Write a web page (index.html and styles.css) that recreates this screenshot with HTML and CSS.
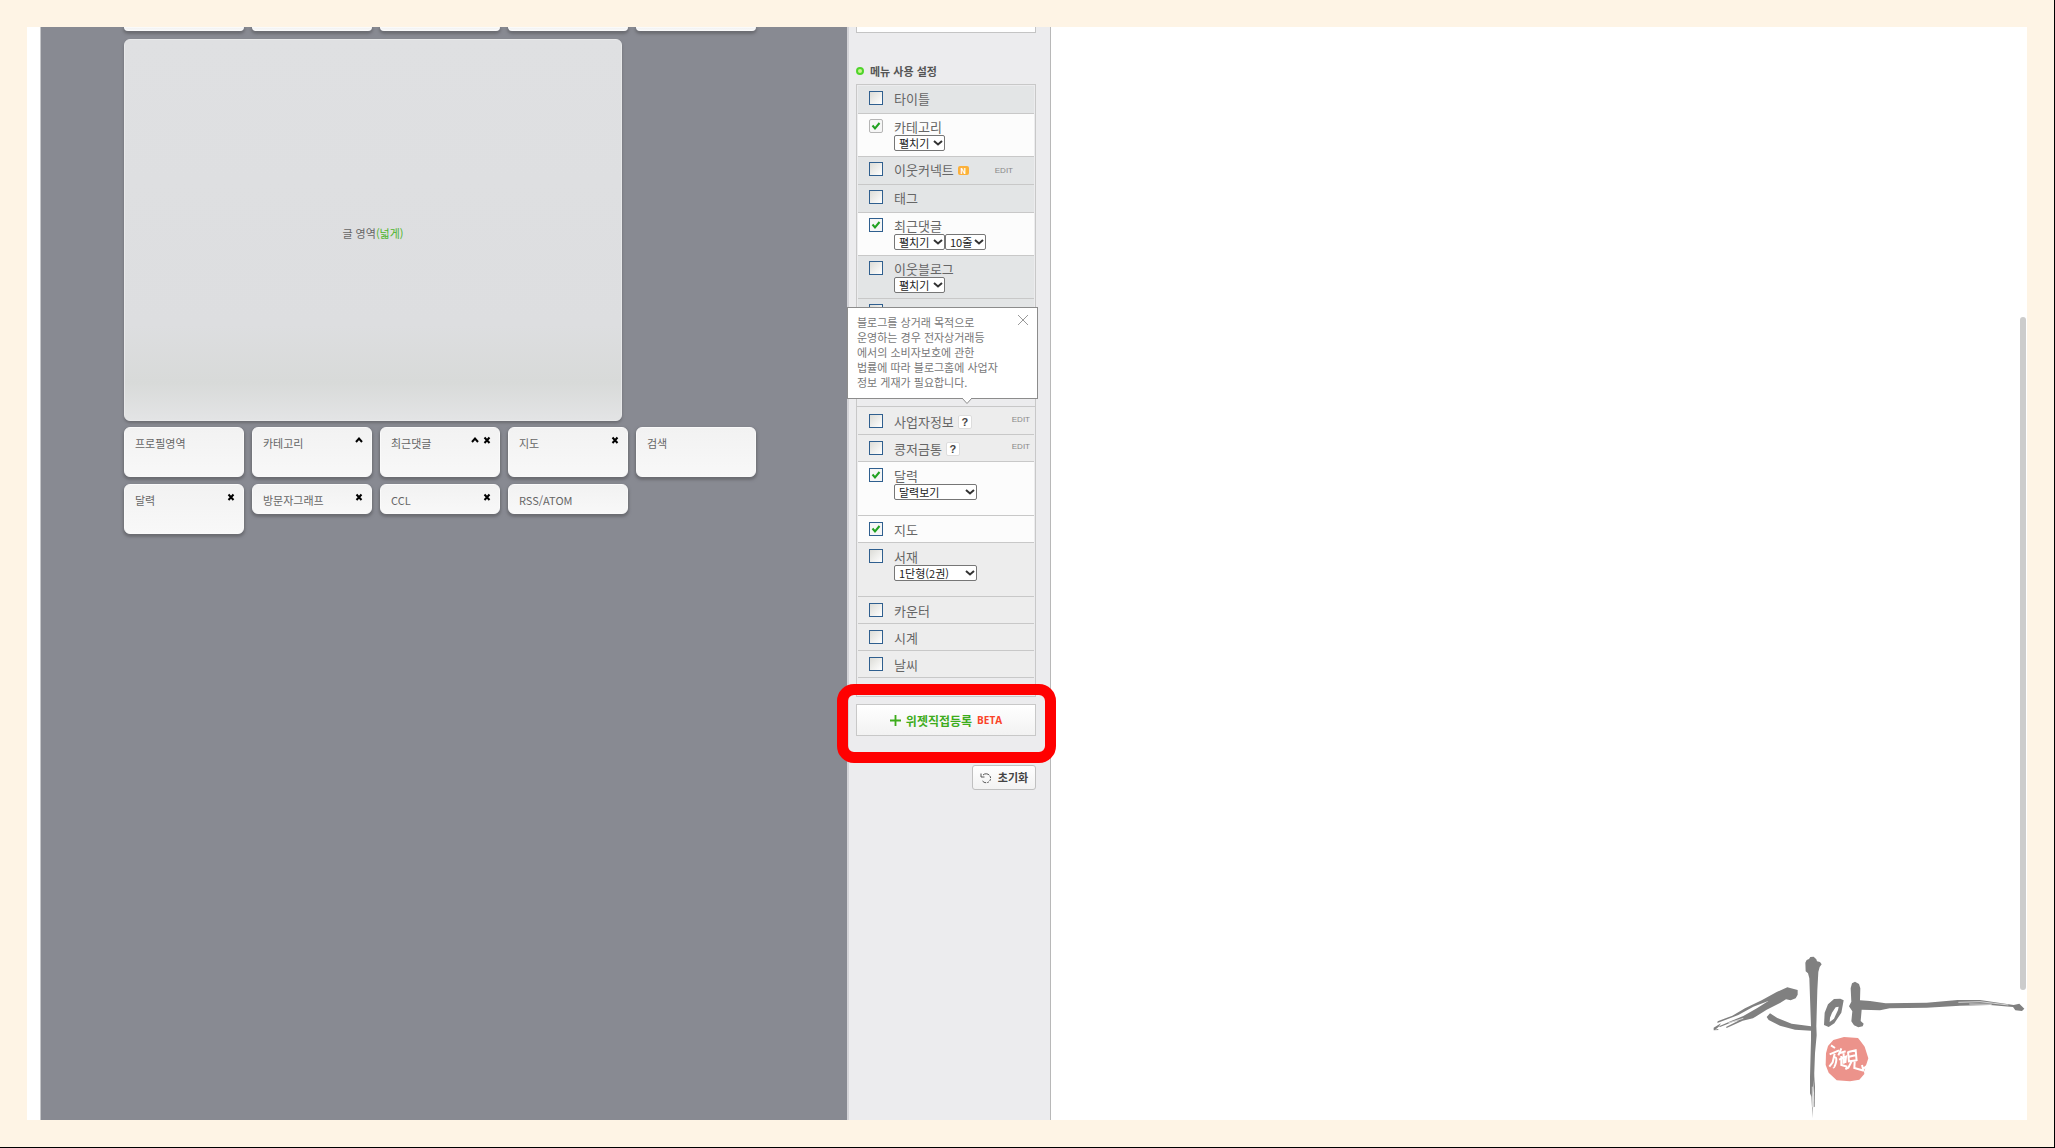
FILE: index.html
```html
<!DOCTYPE html>
<html lang="ko">
<head>
<meta charset="utf-8">
<title>레이아웃 · 위젯 설정</title>
<link rel="stylesheet" href="styles.css">
</head>
<body>
<div class="frame">
  <main class="canvas">
    <div class="grid cut-row">
      <div class="card cut"></div><div class="card cut"></div><div class="card cut"></div><div class="card cut"></div><div class="card cut"></div>
    </div>
    <section class="post-area"><p>글 영역<span class="wide">(넓게)</span></p></section>
    <div class="grid">
      <div class="card tall"><span>프로필영역</span></div>
      <div class="card tall"><span>카테고리</span><span class="tools"><button class="tool" aria-label="접기"><svg viewBox="0 0 8 8"><path d="M1 6 4 2.500 7 6"/></svg></button></span></div>
      <div class="card tall"><span>최근댓글</span><span class="tools"><button class="tool" aria-label="접기"><svg viewBox="0 0 8 8"><path d="M1 6 4 2.500 7 6"/></svg></button><button class="tool" aria-label="삭제"><svg viewBox="0 0 8 8"><path d="M1.500 1.500 6.500 7M6.500 1.500 1.500 7"/></svg></button></span></div>
      <div class="card tall"><span>지도</span><span class="tools"><button class="tool" aria-label="삭제"><svg viewBox="0 0 8 8"><path d="M1.500 1.500 6.500 7M6.500 1.500 1.500 7"/></svg></button></span></div>
      <div class="card tall"><span>검색</span></div>
      <div class="card tall"><span>달력</span><span class="tools"><button class="tool" aria-label="삭제"><svg viewBox="0 0 8 8"><path d="M1.500 1.500 6.500 7M6.500 1.500 1.500 7"/></svg></button></span></div>
      <div class="card"><span>방문자그래프</span><span class="tools"><button class="tool" aria-label="삭제"><svg viewBox="0 0 8 8"><path d="M1.500 1.500 6.500 7M6.500 1.500 1.500 7"/></svg></button></span></div>
      <div class="card"><span>CCL</span><span class="tools"><button class="tool" aria-label="삭제"><svg viewBox="0 0 8 8"><path d="M1.500 1.500 6.500 7M6.500 1.500 1.500 7"/></svg></button></span></div>
      <div class="card"><span>RSS/ATOM</span></div>
    </div>
  </main>

  <aside class="sidebar">
    <div class="upper-box"></div>
    <h2 class="heading">메뉴 사용 설정</h2>
    <div class="menu menu-main">
      <div class="row"><input type="checkbox" id="m1"><div class="body"><label for="m1">타이틀</label></div></div>
      <div class="row on double"><input type="checkbox" id="m2" class="plain" checked><div class="body"><label for="m2">카테고리</label><div class="selects"><select class="s-mid" aria-label="카테고리 보기"><option>펼치기</option></select></div></div></div>
      <div class="row"><input type="checkbox" id="m3"><div class="body"><label for="m3">이웃커넥트</label><span class="new">N</span></div><a class="edit inset" href="#">EDIT</a></div>
      <div class="row"><input type="checkbox" id="m4"><div class="body"><label for="m4">태그</label></div></div>
      <div class="row on double"><input type="checkbox" id="m5" checked><div class="body"><label for="m5">최근댓글</label><div class="selects"><select class="s-mid" aria-label="최근댓글 보기"><option>펼치기</option></select><select class="s-small" aria-label="최근댓글 줄 수"><option>10줄</option></select></div></div></div>
      <div class="row double"><input type="checkbox" id="m6"><div class="body"><label for="m6">이웃블로그</label><div class="selects"><select class="s-mid" aria-label="이웃블로그 보기"><option>펼치기</option></select></div></div></div>
      <div class="row last"><input type="checkbox" id="m7" aria-label="메뉴"></div>
      <div class="popover" role="note">
        <p>블로그를 상거래 목적으로<br>운영하는 경우 전자상거래등<br>에서의 소비자보호에 관한<br>법률에 따라 블로그홈에 사업자<br>정보 게재가 필요합니다.</p>
        <button class="close" aria-label="닫기"><svg viewBox="0 0 12 12"><path d="M1 1 11 11M11 1 1 11"/></svg></button>
        <svg class="arrow" viewBox="0 0 12 7"><path d="M1 0 6 5.500 11 0"/></svg>
      </div>
    </div>
    <div class="menu menu-widgets">
      <div class="row"><input type="checkbox" id="w1"><div class="body"><label for="w1">사업자정보</label><button class="help" aria-label="사업자정보 도움말">?</button></div><a class="edit" href="#">EDIT</a></div>
      <div class="row"><input type="checkbox" id="w2"><div class="body"><label for="w2">콩저금통</label><button class="help" aria-label="콩저금통 도움말">?</button></div><a class="edit" href="#">EDIT</a></div>
      <div class="row on large"><input type="checkbox" id="w3" checked><div class="body"><label for="w3">달력</label><div class="selects"><select class="s-large" aria-label="달력 형식"><option>달력보기</option></select></div></div></div>
      <div class="row on"><input type="checkbox" id="w4" checked><div class="body"><label for="w4">지도</label></div></div>
      <div class="row large"><input type="checkbox" id="w5"><div class="body"><label for="w5">서재</label><div class="selects"><select class="s-large" aria-label="서재 형식"><option>1단형(2권)</option></select></div></div></div>
      <div class="row"><input type="checkbox" id="w6"><div class="body"><label for="w6">카운터</label></div></div>
      <div class="row"><input type="checkbox" id="w7"><div class="body"><label for="w7">시계</label></div></div>
      <div class="row"><input type="checkbox" id="w8"><div class="body"><label for="w8">날씨</label></div></div>
    </div>
    <div class="register">
      <button class="register-btn"><svg viewBox="0 0 12 12"><path d="M6 0V12M0 6H12"/></svg>위젯직접등록 <span class="beta">BETA</span></button>
      <div class="marker"></div>
    </div>
    <button class="reset"><svg viewBox="0 0 12 12"><path d="M3 3A4.500 4.500 0 1 1 2.500 9" stroke-dasharray="7 1 2 1 2 1 2 1"/><path d="M1 1.500V5H4.500"/></svg>초기화</button>
  </aside>

  <div class="scroll-thumb"></div>
  <svg class="signature" viewBox="90 69 951 501" role="img" aria-label="시아">
    <g class="ink">
      <path d="M376 98 380 90 387 87 391 81 401 80 409 88 411 94 420 96 425 103 419 111 415 126 412 180 409 289 410 316 405 370 402 450 398 500 398 565 394 500 390 490 390 440 393 330 393 302 345 299 300 287 266 270 260 261 270 250 292 264 335 281 393 289 388 145 384 130 377 124Z"/>
      <path d="M402 430 405 470 404 530 401 532Z"/>
      <path d="M353 180 353 194 347 205 332 211 318 208 300 219 260 239 219 265 188 272 140 294 138 291 178 271 158 276 120 291 117 289 155 272 190 258 232 234 265 213 220 230 175 255 112 279 113 274 157 257 195 235 245 211 290 186 322 172Z"/>
      <path d="M101 293 123 280 116 290 105 300 112 297 117 300 101 301Z"/>
      <path fill-rule="evenodd" d="M432 285 434 248 444 223 462 207 481 206 491 211 484 248 463 280 446 291ZM449 276 462 266 474 240 476 230 467 232 456 248 450 263Z"/>
      <path d="M512 175 516 160 525 155 537 162 541 175 540 211 570 213 617 220 740 218 833 210 900 210 1001 225 1018 221 1033 236 1026 243 1006 241 999 231 930 225 840 227 740 233 629 235 600 241 545 239 542 273 551 281 548 289 535 292 522 286 514 274 517 244 507 229 514 215Z"/>
    </g>
    <path class="dry" d="M835 217 900 215 985 225M868 222 935 223M160 268 235 228M145 279 190 265M397 470V532"/>
    <path class="seal" d="M460 330 492 321 534 324 543 335 554 350 565 385 552 425 553 432 538 449 510 454 470 451 446 428 437 405 438 370 444 348Z"/>
    <path class="carve" d="M453 346 465 354M449 373 477 361M464 371 458 397 448 410M464 382C476 380 463 417 460 412M484 355 475 376M480 369 497 364M484 378V405L502 410M477 389 498 380 496 399M491 370V401M504 364 507 397M505 366 527 361 530 393M507 380 526 376M508 394 531 391M515 394 505 413 496 417M524 395 523 414 552 422M546 405 549 417 563 406"/>
  </svg>
</div>
</body>
</html>
```
FILE: styles.css
```css
*, *::before { box-sizing: border-box; }

body {
  margin: 0;
  min-height: 100vh;
  padding: 27px;
  display: flex;
  background: #fef4e5;
  border-right: 1px solid #000;
  border-bottom: 1px solid #000;
  font-family: "Noto Sans CJK KR", sans-serif;
  font-size: 11px;
  line-height: 15px;
  color: #666;
}

button { font: inherit; color: inherit; cursor: pointer; }
svg { display: block; fill: none; }

.frame {
  position: relative;
  flex: 1;
  display: flex;
  overflow: hidden;
  padding-left: 13px;
  background: #fff;
}

/* layout canvas */
.canvas {
  flex: 0 1 807px;
  padding-left: 83px;
  background: #888a92;
  border-left: 1px solid #c4c5c8;
}

.grid {
  display: grid;
  grid-template-columns: repeat(5, 120px);
  align-items: start;
  gap: 7px 8px;
}

.card {
  display: flex;
  justify-content: space-between;
  height: 30px;
  padding: 8px 8px 0 10px;
  border: 1px solid #fafafa;
  border-radius: 6px;
  background: linear-gradient(#f2f2f2, #f8f8f8);
  box-shadow: 0 2px 3px 1px #6b6c72;
}
.card.tall { height: 50px; }
.card.cut {
  height: 4px;
  padding: 0;
  border-radius: 0 0 5px 5px;
}

.tools { display: flex; gap: 4px; height: 8px; }
.tool { width: 8px; height: 8px; padding: 0; border: 0; background: none; }
.tool svg { width: 8px; height: 8px; stroke: #000; stroke-width: 2; }

.post-area {
  display: grid;
  place-items: center;
  width: 498px;
  height: 382px;
  margin: 8px 0 6px;
  border: 1px solid #e8e9ea;
  border-radius: 6px;
  background: linear-gradient(#dfe0e2, #dddee0 75%, #d8dad9 90%, #e3e4e5);
  box-shadow: 0 2px 3px #6b6c72;
}
.post-area p { margin: 6px 0 0; }
.wide { color: #4db42c; }

/* settings sidebar */
.sidebar {
  flex: 0 0 204px;
  padding: 0 14px 0 7px;
  background: #ececee;
  border-left: 2px solid #d4d4d8;
  border-right: 1px solid #b8b8b8;
}

.upper-box {
  height: 6px;
  border: 1px solid #c4c4c4;
  border-top: 0;
  background: #fff;
}

.heading {
  display: flex;
  align-items: center;
  gap: 6px;
  margin: 30px 0 5px;
  font-size: 11px;
  line-height: 16px;
  color: #555;
}
.heading::before {
  content: "";
  width: 8px;
  height: 8px;
  border: 2px solid #4fd42c;
  border-radius: 50%;
  background: #c8f58e;
}

.menu {
  position: relative;
  padding: 1px;
  border: 1px solid #c8c8c8;
}
.menu-main { --row: #e3e5e6; height: 322px; border-bottom: 0; }
.menu-widgets { --row: #ededed; height: 291px; }

.row {
  display: flex;
  align-items: flex-start;
  height: 27px;
  padding: 6px 4px 0 11px;
  background: var(--row);
  border-bottom: 1px solid #c8c8c8;
}
.menu-main .row { height: 28px; padding-top: 5px; }
.menu-main .double { height: 43px; }
.row.on { background: #fcfcfc; }
.row.large { height: 54px; }
.row.last { border-bottom: 0; }

.row input {
  appearance: none;
  width: 14px;
  height: 14px;
  margin: 0;
  border: 1px solid #2f5f8f;
  background: linear-gradient(135deg, #dcdcd7, #fff);
}
.row input.plain { border-color: #b5b5b5; border-radius: 2px; }
.row input:checked {
  background: #f6f6f6 url("data:image/svg+xml,%3Csvg xmlns='http://www.w3.org/2000/svg' viewBox='0 0 12 12'%3E%3Cpath d='M2.500 5.500 5 8.500 9.500 3' fill='none' stroke='%2321a121' stroke-width='2'/%3E%3C/svg%3E");
}

.body {
  flex: 1;
  display: flex;
  flex-wrap: wrap;
  align-items: center;
  gap: 0 4px;
  margin-left: 11px;
  font-size: 13px;
  line-height: 16px;
}
.selects { display: flex; flex-basis: 100%; }

select {
  appearance: none;
  height: 16px;
  padding: 0 0 0 4px;
  border: 1px solid #767676;
  border-radius: 2px;
  background: #fff url("data:image/svg+xml,%3Csvg xmlns='http://www.w3.org/2000/svg' viewBox='0 0 10 6'%3E%3Cpath d='M1 1 5 4.500 9 1' fill='none' stroke='%23333' stroke-width='2'/%3E%3C/svg%3E") no-repeat right 1px center / 10px 6px;
  font: 11px/14px "Noto Sans CJK KR", sans-serif;
  color: #222;
}
.s-mid { width: 51px; }
.s-small { width: 41px; }
.s-large { width: 83px; }

.new {
  width: 11px;
  height: 9px;
  border-radius: 2px;
  background: #fbb03b;
  font-size: 8px;
  font-weight: 700;
  line-height: 9px;
  text-align: center;
  color: #fff;
}
.edit {
  font: 8px/12px "Liberation Sans", sans-serif;
  color: #888;
  text-decoration: none;
}
.edit.inset { padding: 3px 17px 0 0; }

.help {
  width: 14px;
  height: 14px;
  padding: 0;
  border: 1px solid #ddd;
  border-radius: 2px;
  background: #fff;
  font: 700 11px/12px "Liberation Sans", sans-serif;
  color: #444;
}

/* notice above the business row */
.popover {
  position: absolute;
  left: -10px;
  top: 222px;
  width: 191px;
  height: 92px;
  padding: 7px 9px;
  border: 1px solid #8c8c8c;
  background: #fff;
  color: #777;
}
.popover p { margin: 0; }
.close {
  position: absolute;
  top: 5px;
  right: 7px;
  width: 14px;
  height: 14px;
  padding: 1px;
  border: 0;
  background: none;
}
.close svg { stroke: #999; }
.arrow {
  position: absolute;
  left: 113px;
  top: 90px;
  width: 12px;
  height: 7px;
  fill: #fff;
  stroke: #8c8c8c;
}

.register { position: relative; padding-top: 7px; }
.register-btn {
  display: flex;
  align-items: center;
  justify-content: center;
  gap: 5px;
  width: 100%;
  height: 32px;
  border: 1px solid #c8c8c8;
  background: linear-gradient(#fff, #f2f2f2);
  font-size: 12px;
  font-weight: 700;
  color: #3dac1c;
}
.register-btn svg { width: 11px; height: 11px; stroke: currentColor; stroke-width: 2; }
.beta { font: 700 10px/12px "Open Sans", sans-serif; color: #fa4328; }
.marker {
  position: absolute;
  inset: -13px -20px -27px -19px;
  border: 11px solid #f00;
  border-radius: 17px;
  pointer-events: none;
}

.reset {
  display: flex;
  align-items: center;
  justify-content: center;
  gap: 6px;
  width: 64px;
  height: 25px;
  margin: 29px 0 0 auto;
  padding: 0;
  border: 1px solid #c0c0c0;
  border-radius: 3px;
  background: linear-gradient(#fff, #f2f2f2);
  font-weight: 700;
  color: #444;
}
.reset svg { width: 12px; height: 12px; stroke: #555; }

.scroll-thumb {
  position: absolute;
  right: 1px;
  top: 290px;
  width: 6px;
  height: 673px;
  border-radius: 3px;
  background: #ccc;
}

/* brush signature */
.signature {
  position: absolute;
  right: 0;
  bottom: 0;
  width: 317px;
  height: 167px;
}
.ink { fill: #808080; }
.dry { stroke: #fff; stroke-width: 2; }
.seal { fill: #ec938b; }
.carve { stroke: #fff; stroke-width: 6; }
```
